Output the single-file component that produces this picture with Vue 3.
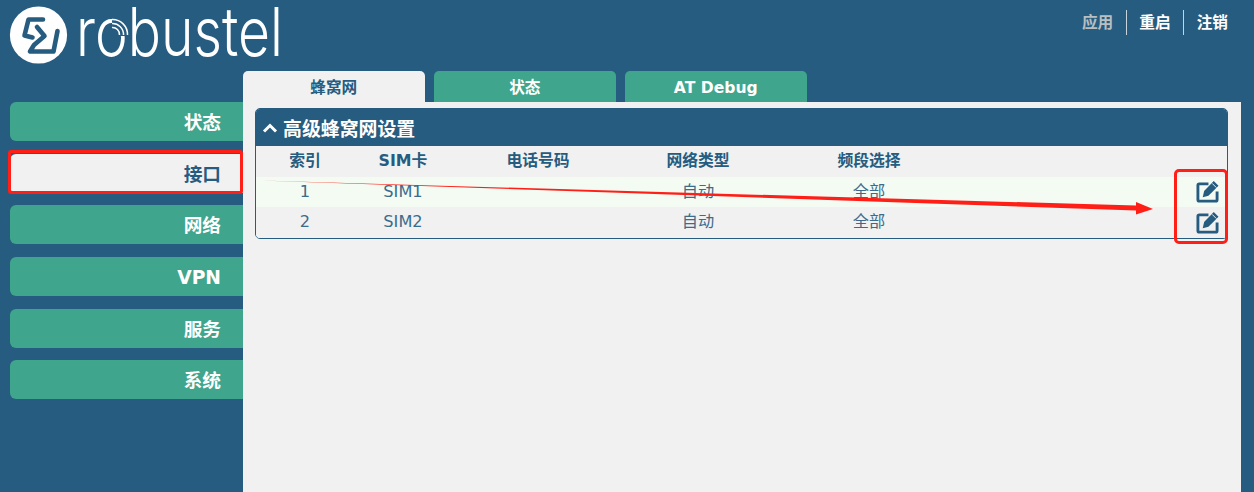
<template>
  <div class="page">
    <header class="top">
      <div class="logo">
        <svg class="logo-mark" width="60" height="60" viewBox="0 0 60 60">
          <circle cx="30.500" cy="30" r="28.600" fill="#fff" />
          <g fill="none" stroke="#255c80" stroke-width="4.600" stroke-linejoin="round" stroke-linecap="round">
            <path d="M35 14.500 H20.500 L16.500 30.500 L24.500 32.500" />
            <path d="M29 22 L36.500 31 L26 40 L22 46.500 H45.500 L49.500 26" />
          </g>
        </svg>
        <div class="brand">
          <span class="wordmark">robustel</span>
          <svg class="signal" width="24" height="24" viewBox="0 0 24 24">
            <rect x="4" y="0" width="20" height="18" fill="#255c80" />
            <g fill="none" stroke="#fff" stroke-width="1.500">
              <path d="M4 9.500 A7 7 0 0 1 11.500 17" />
              <path d="M4 5.500 A11 11 0 0 1 15.500 17" />
              <path d="M4 1.500 A15 15 0 0 1 19.500 17" />
            </g>
          </svg>
        </div>
      </div>
      <div class="actions">
        <span class="action muted">应用</span>
        <span class="action">重启</span>
        <span class="action">注销</span>
      </div>
    </header>

    <div class="tabs">
      <div
        v-for="tab in tabs"
        :key="tab"
        class="tab"
        :class="{ active: tab === '蜂窝网' }"
      >
        {{ tab }}
      </div>
    </div>

    <div class="body">
      <nav class="side">
        <div
          v-for="item in menu"
          :key="item"
          class="side-item"
          :class="{ active: item === '接口' }"
        >
          {{ item }}
        </div>
      </nav>

      <main class="content">
        <section class="box">
          <div class="box-title">
            <svg width="16" height="12" viewBox="0 0 16 12">
              <path d="M2 9.500 L8 3.500 L14 9.500" fill="none" stroke="#fff" stroke-width="3" />
            </svg>
            <span>高级蜂窝网设置</span>
          </div>
          <div class="row head">
            <div v-for="col in cols" :key="col">{{ col }}</div>
          </div>
          <div v-for="r in rows" :key="r.id" class="row">
            <div>{{ r.id }}</div>
            <div>{{ r.sim }}</div>
            <div></div>
            <div>{{ r.type }}</div>
            <div>{{ r.band }}</div>
            <div class="edit">
              <svg width="23" height="23" viewBox="0 0 24 24">
                <path d="M13 4 H3.500 A1.500 1.500 0 0 0 2 5.500 V20.500 A1.500 1.500 0 0 0 3.500 22 H20.500 A1.500 1.500 0 0 0 22 20.500 V12" fill="none" stroke="#255c80" stroke-width="3" />
                <path d="M18.500 1 L23.500 6 L13 16.500 L7 18 L8.500 11.500 Z" fill="#255c80" />
                <path d="M16.800 3.500 L21.200 7.900" stroke="#f1f1f1" stroke-width="1" />
              </svg>
            </div>
          </div>
        </section>
      </main>
    </div>

    <!-- red annotations drawn on top of the screenshot -->
    <div class="mark mark-nav"></div>
    <div class="mark mark-edit"></div>
    <svg class="arrow" width="1254" height="492" viewBox="0 0 1254 492">
      <polygon points="260,180.500 1136,205.500 1136,202 1153,209 1136,214.500 1136,210.500" fill="#ff1f17" />
    </svg>
  </div>
</template>

<script setup>
const tabs = ['蜂窝网', '状态', 'AT Debug']
const menu = ['状态', '接口', '网络', 'VPN', '服务', '系统']
const cols = ['索引', 'SIM卡', '电话号码', '网络类型', '频段选择']
const rows = [
  { id: 1, sim: 'SIM1', type: '自动', band: '全部' },
  { id: 2, sim: 'SIM2', type: '自动', band: '全部' }
]
</script>

<style>
html, body {
  margin: 0;
  background: #255c80;
}
</style>

<style scoped>
.page {
  position: relative;
  width: 1254px;
  height: 492px;
  overflow: hidden;
  background: #255c80;
  font-family: "DejaVu Sans", "Noto Sans CJK SC", sans-serif;
  color: #255c80;
}

.top {
  height: 71px;
  display: flex;
  justify-content: space-between;
  box-sizing: border-box;
  padding: 5px 26px 0 8px;
}

.logo {
  display: flex;
  align-items: flex-start;
  gap: 8px;
}

.brand {
  position: relative;
}

.wordmark {
  display: block;
  font-family: Inter, sans-serif;
  font-weight: 300;
  font-size: 67px;
  line-height: 63px;
  margin-top: -5px;
  white-space: nowrap;
  color: #fff;
  transform: scaleX(0.824);
  transform-origin: left top;
}

.signal {
  position: absolute;
  left: 32px;
  top: 13px;
}

.actions {
  display: flex;
  align-items: center;
  height: 25px;
  margin-top: 5px;
}

.action {
  padding: 0 12.500px;
  font-size: 15.700px;
  font-weight: 700;
  color: #fff;
  border-left: 1px solid #c8d4dc;
  line-height: 25px;
}

.action:first-child {
  border-left: 0;
}

.action:last-child {
  padding-right: 0;
}

.action.muted {
  color: #b9bec1;
}

.tabs {
  display: flex;
  gap: 9.500px;
  margin-left: 243px;
  height: 31px;
}

.tab {
  width: 181.500px;
  background: #3fa58c;
  border-radius: 5px 5px 0 0;
  color: #fff;
  font-size: 15.600px;
  font-weight: 700;
  text-align: center;
  line-height: 35px;
}

.tab.active {
  background: #f1f1f1;
  color: #255c80;
}

.body {
  display: flex;
  height: 390px;
}

.side {
  width: 233px;
  margin-left: 10px;
  display: flex;
  flex-direction: column;
  gap: 12.700px;
}

.side-item {
  height: 39px;
  background: #3fa58c;
  border-radius: 6px 0 0 6px;
  color: #fff;
  font-size: 18.700px;
  font-weight: 700;
  line-height: 41px;
  text-align: right;
  padding-right: 22px;
}

.side-item.active {
  background: #f1f1f1;
  color: #255c80;
}

.content {
  width: 998px;
  background: #f1f1f1;
  box-sizing: border-box;
  padding: 6px 13px 0 12px;
}

.box {
  border: 1px solid #255c80;
  border-radius: 5px;
  overflow: hidden;
}

.box-title {
  height: 37px;
  background: #255c80;
  color: #fff;
  font-size: 18.900px;
  font-weight: 700;
  display: flex;
  align-items: center;
  gap: 5px;
  padding-left: 6px;
}

.row {
  display: grid;
  grid-template-columns: 98px 98px 172px 148px 194px 1fr;
  height: 30.500px;
  line-height: 30px;
  font-size: 16.200px;
  text-align: center;
  background: #f1f1f1;
  color: #3b6c8c;
}

.row.head {
  font-size: 15.800px;
  font-weight: 700;
  color: #255c80;
}

.row:nth-child(3) {
  background: #f3fbf3;
}

.edit {
  display: flex;
  justify-content: flex-end;
  align-items: center;
  padding-right: 8px;
}

.mark {
  position: absolute;
  box-sizing: border-box;
  border: 3px solid #ff1f17;
}

.mark-nav {
  left: 8px;
  top: 150px;
  width: 235px;
  height: 44px;
  border-radius: 3px;
}

.mark-edit {
  left: 1174px;
  top: 169px;
  width: 54px;
  height: 75px;
  border-radius: 5px;
}

.arrow {
  position: absolute;
  left: 0;
  top: 0;
}
</style>
